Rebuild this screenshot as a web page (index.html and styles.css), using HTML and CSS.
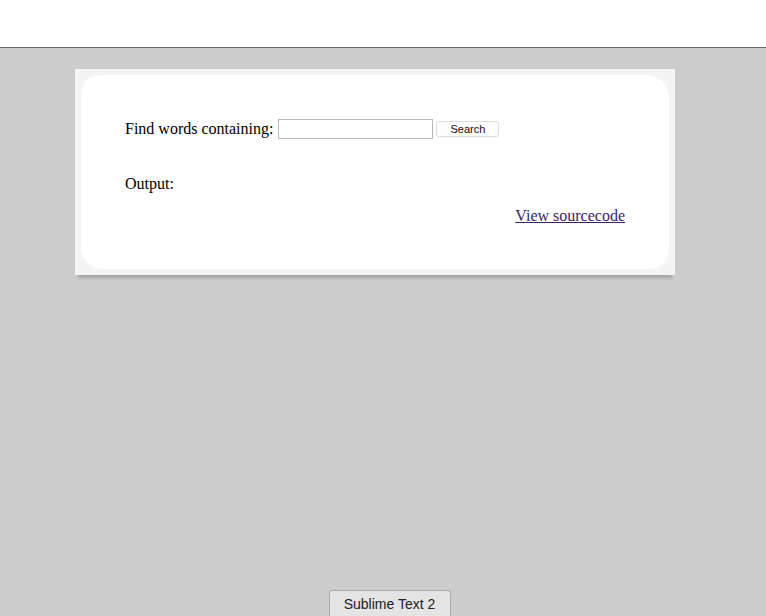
FILE: index.html
```html
<!DOCTYPE html>
<html>
<head>
<meta charset="utf-8">
<link rel="stylesheet" href="styles.css">
</head>
<body>
<div class="topbar"></div>
<div class="stage">
  <div class="card">
    <div class="card-inner">
      <form class="finder">
        <label class="finder-label" for="q">Find words containing:</label>
        <input class="finder-input" id="q" type="text">
        <button class="finder-btn" type="button">Search</button>
      </form>
      <p class="output">Output:</p>
      <div class="source"><a class="source-link" href="#">View sourcecode</a></div>
    </div>
  </div>
  <div class="dock">
    <button class="dock-btn" type="button">Sublime Text 2</button>
  </div>
</div>
</body>
</html>
```
FILE: styles.css
```css
html, body {
  margin: 0;
  padding: 0;
  height: 100%;
}
body {
  display: flex;
  flex-direction: column;
  background: #cccccc;
  font-family: "Liberation Serif", "Times New Roman", serif;
  font-size: 16px;
  color: #000;
}
.topbar {
  height: 47px;
  background: #ffffff;
  border-bottom: 1px solid #6b6b6b;
  flex: none;
}
.stage {
  flex: 1;
  display: flex;
  flex-direction: column;
  padding-top: 21px;
}
.card {
  width: 600px;
  margin-left: 75px;
  box-sizing: border-box;
  padding: 6px;
  background: #f4f4f4;
  box-shadow: 0 6px 3px -3px rgba(0,0,0,0.2);
}
.card-inner {
  background: #ffffff;
  border-radius: 18px 22px 20px 22px;
  padding: 44px 44px 43px 44px;
}
.finder {
  display: flex;
  align-items: center;
  height: 20px;
  margin: 0;
}
.finder-label {
  margin-right: 5px;
  line-height: 20px;
}
.finder-input {
  width: 155px;
  height: 20px;
  box-sizing: border-box;
  border: 1px solid #b9b9b9;
  margin: 0;
  padding: 0 2px;
}
.finder-btn {
  margin-left: 3px;
  width: 63px;
  height: 16px;
  box-sizing: border-box;
  padding: 0;
  border: 1px solid #dcdcdc;
  border-radius: 3px;
  background: #fdfdfd;
  font-family: "Liberation Sans", Arial, sans-serif;
  font-size: 11px;
  color: #111;
}
.output {
  margin: 35px 0 0 0;
  line-height: 20px;
}
.source {
  margin-top: 12px;
  text-align: right;
  line-height: 20px;
}
.source-link {
  color: #3b2466;
}
.dock {
  margin-top: auto;
  display: flex;
  justify-content: center;
  padding-left: 13px;
}
.dock-btn {
  width: 122px;
  height: 27px;
  box-sizing: border-box;
  margin-bottom: -1px;
  border: 1px solid #a9a9a9;
  border-bottom: none;
  border-radius: 3px 3px 0 0;
  background: #e4e4e4;
  font-family: "Liberation Sans", Arial, sans-serif;
  font-size: 14px;
  color: #222;
  padding: 0;
}
```
